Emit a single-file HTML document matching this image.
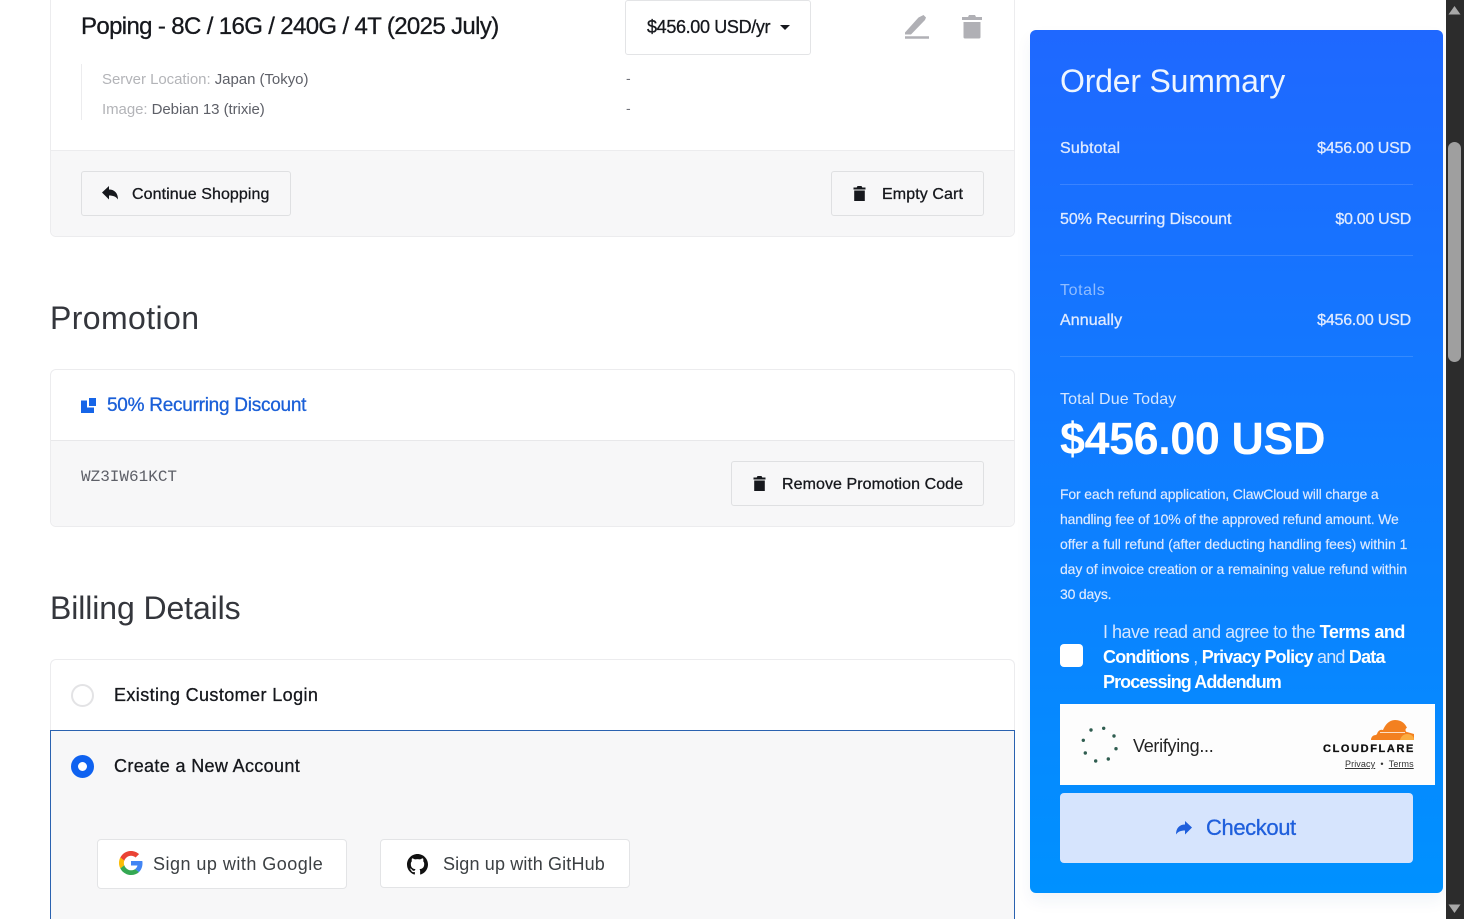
<!DOCTYPE html>
<html lang="en">
<head>
<meta charset="utf-8">
<title>Order Summary</title>
<style>
html,body{margin:0;padding:0;background:#fff;overflow:hidden}
body{width:1464px;height:919px;position:relative;font-family:"Liberation Sans",Arial,sans-serif;color:#16181d}
.a{position:absolute;box-sizing:border-box}
.t{position:absolute;white-space:nowrap;line-height:20px;height:20px}
.m{-webkit-text-stroke:.3px currentColor}
.btn{position:absolute;box-sizing:border-box;border:1px solid #e3e4e6;border-radius:3px}
.wt{color:#dfeaff}
svg{position:absolute;overflow:visible}
</style>
</head>
<body>

<!-- cart card -->
<div class="a" style="left:50px;top:-10px;width:965px;height:247px;border:1px solid #ececee;border-radius:6px;background:#fff"></div>
<div class="a" style="left:51px;top:150px;width:963px;height:86px;background:#f7f7f8;border-top:1px solid #ececee;border-radius:0 0 6px 6px"></div>
<div class="t m" style="left:81px;top:17px;font-size:24px;letter-spacing:-.64px;color:#16181d">Poping - 8C / 16G / 240G / 4T (2025 July)</div>
<div class="a" style="left:81px;top:64px;width:1px;height:56px;background:#ececee"></div>
<div class="t" style="left:102px;top:70px;font-size:15px;letter-spacing:-.04px;color:#b3b4b8">Server Location: <span style="color:#5e6068">Japan (Tokyo)</span></div>
<div class="t" style="left:102px;top:100px;font-size:15px;letter-spacing:-.06px;color:#b3b4b8">Image: <span style="color:#5e6068">Debian 13 (trixie)</span></div>
<div class="t" style="left:626px;top:68px;font-size:14px;color:#70727a">-</div>
<div class="t" style="left:626px;top:98px;font-size:14px;color:#70727a">-</div>

<div class="btn" style="left:625px;top:0;width:186px;height:55px;background:#fff"></div>
<div class="t m" style="left:647px;top:17px;font-size:18px;letter-spacing:-.35px">$456.00 USD/yr</div>
<svg style="left:780px;top:25px" width="10" height="5" viewBox="0 0 10 5"><path d="M0 0h10L5 5z" fill="#16181d"/></svg>

<!-- edit icon -->
<svg style="left:904px;top:14px" width="26" height="26" viewBox="0 0 26 26"><path d="M1 18.500 14.500 3.500 19.500 1 22 3.500 21 6 7 20.500H1z" fill="#b0b0b5"/><path d="M1 23.500h24" stroke="#b0b0b5" stroke-width="2.400"/></svg>
<!-- trash icon -->
<svg style="left:962px;top:14px" width="20" height="26" viewBox="0 0 20 26"><path d="M7 1h6l1 2h6v3H0V3h6z" fill="#b0b0b5"/><path d="M1.500 8h17v15a1.500 1.500 0 0 1-1.500 1.500H3A1.500 1.500 0 0 1 1.500 23z" fill="#b0b0b5"/></svg>

<div class="btn" style="left:81px;top:171px;width:210px;height:45px;background:#f7f7f8;border-color:#dfe0e2"></div>
<svg style="left:102px;top:186px" width="16" height="14" viewBox="0 0 16 14"><path d="M7 0v3.500C12.500 3.500 16 7 16 13.500 14 10.500 11 9.500 7 9.500V13.500L0 6.500z" fill="#16181d"/></svg>
<div class="t m" style="left:132px;top:185px;font-size:16px;letter-spacing:.08px">Continue Shopping</div>

<div class="btn" style="left:831px;top:171px;width:153px;height:45px;background:#f7f7f8;border-color:#dfe0e2"></div>
<svg style="left:853px;top:186px" width="13" height="15" viewBox="0 0 13 15"><path d="M4.500 0h4l.8 1.500h3.200v2H.500v-2h3.200z" fill="#16181d"/><path d="M1.200 4.500h10.600v10.500H1.200z" fill="#16181d"/></svg>
<div class="t m" style="left:882px;top:185px;font-size:16px;letter-spacing:.1px">Empty Cart</div>

<!-- Promotion -->
<div class="t" style="left:50px;top:303px;height:30px;line-height:30px;font-size:32px;letter-spacing:.4px;color:#34363c">Promotion</div>
<div class="a" style="left:50px;top:369px;width:965px;height:158px;border:1px solid #ececee;border-radius:6px;background:#fff"></div>
<div class="a" style="left:51px;top:440px;width:963px;height:86px;background:#f7f7f8;border-top:1px solid #e8e8ea;border-radius:0 0 6px 6px"></div>
<svg style="left:81px;top:398px" width="15" height="15" viewBox="0 0 15 15"><path d="M0 2.500h6v7h7v5.500H0z" fill="#1665e8"/><path d="M8 0h7v8H8z" fill="#1665e8"/></svg>
<div class="t m" style="left:107px;top:396px;font-size:19px;letter-spacing:-.26px;color:#1a5fd8">50% Recurring Discount</div>
<div class="t" style="left:81px;top:467px;font-family:'Liberation Mono',monospace;font-size:16px;color:#5e6068">WZ3IW61KCT</div>

<div class="btn" style="left:731px;top:461px;width:253px;height:45px;background:#f7f7f8;border-color:#dfe0e2"></div>
<svg style="left:753px;top:476px" width="13" height="15" viewBox="0 0 13 15"><path d="M4.500 0h4l.8 1.500h3.200v2H.500v-2h3.200z" fill="#16181d"/><path d="M1.200 4.500h10.600v10.500H1.200z" fill="#16181d"/></svg>
<div class="t m" style="left:782px;top:475px;font-size:16px;letter-spacing:.07px">Remove Promotion Code</div>

<!-- Billing -->
<div class="t" style="left:50px;top:593px;height:30px;line-height:30px;font-size:32px;letter-spacing:-.1px;color:#34363c">Billing Details</div>
<div class="a" style="left:50px;top:659px;width:965px;height:72px;border:1px solid #ececee;border-bottom:0;border-radius:6px 6px 0 0;background:#fff"></div>
<div class="a" style="left:71px;top:684px;width:23px;height:23px;border:2px solid #e3e3e5;border-radius:50%;background:#fff"></div>
<div class="t m" style="left:114px;top:685px;font-size:18px;letter-spacing:.4px">Existing Customer Login</div>

<div class="a" style="left:50px;top:730px;width:965px;height:200px;border:1px solid #2a62b0;background:#f7f7f8"></div>
<div class="a" style="left:71px;top:755px;width:23px;height:23px;border:7px solid #0f62f0;border-radius:50%;background:#fff"></div>
<div class="t m" style="left:114px;top:756px;font-size:18px;letter-spacing:.35px">Create a New Account</div>

<div class="btn" style="left:97px;top:839px;width:250px;height:50px;background:#fff;border-radius:4px"></div>
<svg style="left:119px;top:851px" width="24" height="24" viewBox="0 0 48 48"><path fill="#ea4335" d="M24 9.500c3.500 0 6.700 1.200 9.200 3.600l6.900-6.900C35.900 2.400 30.500 0 24 0 14.600 0 6.500 5.400 2.600 13.200l8 6.200C12.500 13.700 17.800 9.500 24 9.500z"/><path fill="#4285f4" d="M47 24.600c0-1.600-.1-3.100-.4-4.600H24v9.100h12.900c-.6 3-2.300 5.500-4.800 7.200l7.700 6c4.500-4.200 7.200-10.300 7.200-17.700z"/><path fill="#fbbc05" d="M10.500 28.700c-.5-1.500-.8-3-.8-4.700s.3-3.200.8-4.700l-8-6.200C.9 16.500 0 20.100 0 24s.9 7.500 2.600 10.800z"/><path fill="#34a853" d="M24 48c6.500 0 11.900-2.100 15.900-5.800l-7.700-6c-2.200 1.500-4.900 2.300-8.200 2.300-6.300 0-11.500-4.200-13.400-9.900l-8 6.200C6.500 42.600 14.600 48 24 48z"/></svg>
<div class="t" style="left:153px;top:854px;font-size:18px;letter-spacing:.48px;color:#3c4043">Sign up with Google</div>

<div class="btn" style="left:380px;top:839px;width:250px;height:49px;background:#fff;border-radius:4px"></div>
<svg style="left:407px;top:854px" width="21" height="21" viewBox="0 0 16 16"><path fill="#111" d="M8 0C3.580 0 0 3.580 0 8c0 3.540 2.290 6.530 5.470 7.590.4.070.55-.17.550-.38 0-.19-.01-.82-.01-1.490-2.010.37-2.530-.49-2.690-.94-.09-.23-.48-.94-.82-1.130-.28-.15-.68-.52-.01-.53.630-.01 1.080.58 1.230.82.720 1.210 1.870.87 2.330.66.070-.52.280-.87.510-1.070-1.780-.2-3.640-.89-3.640-3.950 0-.87.310-1.590.82-2.150-.08-.2-.36-1.020.08-2.120 0 0 .67-.21 2.200.82.640-.18 1.320-.27 2-.27s1.360.09 2 .27c1.530-1.040 2.200-.82 2.200-.82.440 1.100.16 1.920.08 2.120.51.560.82 1.270.82 2.150 0 3.070-1.870 3.750-3.650 3.950.290.25.540.73.540 1.480 0 1.070-.01 1.930-.01 2.200 0 .21.150.46.550.38A8.013 8.013 0 0 0 16 8c0-4.420-3.580-8-8-8z"/></svg>
<div class="t" style="left:443px;top:854px;font-size:18px;letter-spacing:.15px;color:#3c4043">Sign up with GitHub</div>

<!-- Order summary -->
<div class="a" style="left:1030px;top:30px;width:413px;height:863px;border-radius:6px;background:linear-gradient(180deg,#1f68ff 0%,#0091ff 100%);box-shadow:0 8px 16px rgba(0,60,140,.06)"></div>
<div class="t" style="left:1060px;top:64px;height:34px;line-height:34px;font-size:32px;letter-spacing:-.2px;color:#eef5ff">Order Summary</div>

<div class="t m wt" style="left:1060px;top:139px;font-size:16px;letter-spacing:.2px">Subtotal</div>
<div class="t m wt" style="right:53px;top:139px;font-size:16px;letter-spacing:-.2px">$456.00 USD</div>
<div class="a" style="left:1060px;top:184px;width:353px;height:1px;background:rgba(255,255,255,.14)"></div>
<div class="t m wt" style="left:1060px;top:210px;font-size:16px;letter-spacing:-.05px">50% Recurring Discount</div>
<div class="t m wt" style="right:53px;top:210px;font-size:16px;letter-spacing:-.3px">$0.00 USD</div>
<div class="a" style="left:1060px;top:255px;width:353px;height:1px;background:rgba(255,255,255,.14)"></div>
<div class="t" style="left:1060px;top:281px;font-size:16px;letter-spacing:.6px;color:#8fbcff">Totals</div>
<div class="t m wt" style="left:1060px;top:311px;font-size:16px;letter-spacing:.1px">Annually</div>
<div class="t m wt" style="right:53px;top:311px;font-size:16px;letter-spacing:-.2px">$456.00 USD</div>
<div class="a" style="left:1060px;top:356px;width:353px;height:1px;background:rgba(255,255,255,.14)"></div>

<div class="t" style="left:1060px;top:390px;font-size:16px;letter-spacing:.13px;color:#d5e6ff">Total Due Today</div>
<div class="t" style="left:1060px;top:416px;height:46px;line-height:46px;font-size:45px;font-weight:700;letter-spacing:-.47px;color:#fff">$456.00 USD</div>

<div class="t m" style="left:1060px;top:484px;font-size:14px;letter-spacing:-.16px;color:#dfeaff;-webkit-text-stroke-width:.15px">For each refund application, ClawCloud will charge a</div>
<div class="t m" style="left:1060px;top:509px;font-size:14px;letter-spacing:-.17px;color:#dfeaff;-webkit-text-stroke-width:.15px">handling fee of 10% of the approved refund amount. We</div>
<div class="t m" style="left:1060px;top:534px;font-size:14px;letter-spacing:-.03px;color:#dfeaff;-webkit-text-stroke-width:.15px">offer a full refund (after deducting handling fees) within 1</div>
<div class="t m" style="left:1060px;top:559px;font-size:14px;letter-spacing:-.11px;color:#dfeaff;-webkit-text-stroke-width:.15px">day of invoice creation or a remaining value refund within</div>
<div class="t m" style="left:1060px;top:584px;font-size:14px;letter-spacing:-.2px;color:#dfeaff;-webkit-text-stroke-width:.15px">30 days.</div>

<div class="a" style="left:1060px;top:644px;width:23px;height:23px;border-radius:4px;background:#fff"></div>
<div class="t" style="left:1103px;top:622px;font-size:18px;letter-spacing:-.5px;color:#d5e6ff">I have read and agree to the <b style="color:#fff">Terms and</b></div>
<div class="t" style="left:1103px;top:647px;font-size:18px;letter-spacing:-.79px;color:#d5e6ff"><b style="color:#fff">Conditions</b> , <b style="color:#fff">Privacy Policy</b> and <b style="color:#fff">Data</b></div>
<div class="t" style="left:1103px;top:672px;font-size:18px;letter-spacing:-.92px;color:#fff"><b>Processing Addendum</b></div>

<!-- Turnstile -->
<div class="a" style="left:1060px;top:704px;width:375px;height:81px;background:#fdfdfd"></div>
<svg style="left:1080px;top:725px" width="40" height="40" viewBox="0 0 40 40"><g fill="#2f5d50"><circle cx="11" cy="5" r="1.700"/><circle cx="23.700" cy="3.300" r="1.700"/><circle cx="34" cy="11" r="1.700"/><circle cx="36" cy="23.700" r="1.700"/><circle cx="28.300" cy="34" r="1.700"/><circle cx="15.700" cy="36" r="1.700"/><circle cx="5.300" cy="28" r="1.700"/><circle cx="3.300" cy="15.300" r="1.700"/></g></svg>
<div class="t" style="left:1133px;top:736px;font-size:18px;letter-spacing:-.3px;color:#232323">Verifying...</div>
<svg style="left:1370px;top:720px" width="45" height="20" viewBox="0 0 45 20"><path d="M1 20c0-3 2-5 5-5l1-1c1-3 3-5 6-4 2-5 6-10 12-10s10 3 12 8c-2 0-2 4 0 4l7 2v6z" fill="#f38020"/><path d="M30 20c1-4 4-6 7-6 4 0 7 2 7 6z" fill="#fbad41"/><path d="M10 12.500h25" stroke="#fff" stroke-width=".8"/></svg>
<div class="t" style="left:1323px;top:739px;font-size:11px;font-weight:700;letter-spacing:1.62px;color:#111;-webkit-text-stroke:.3px #111">CLOUDFLARE</div>
<div class="t" style="left:1345px;top:754px;font-size:9px;letter-spacing:.1px;color:#333"><span style="text-decoration:underline">Privacy</span> &nbsp;•&nbsp; <span style="text-decoration:underline">Terms</span></div>

<!-- Checkout -->
<div class="a" style="left:1060px;top:793px;width:353px;height:70px;border-radius:4px;background:#d6e4fd"></div>
<svg style="left:1176px;top:821px" width="16" height="14" viewBox="0 0 16 14"><path d="M9 0v3.500C3.500 3.500 0 7 0 13.500 2 10.500 5 9.500 9 9.500V13.500L16 6.500z" fill="#1f5fdc"/></svg>
<div class="t m" style="left:1206px;top:818px;font-size:22px;letter-spacing:-.4px;color:#1f5fdc">Checkout</div>

<!-- Scrollbar -->
<div class="a" style="left:1446px;top:0;width:18px;height:919px;background:#2c2c2c"></div>
<div class="a" style="left:1448px;top:142px;width:13px;height:220px;border-radius:7px;background:#9f9f9f"></div>
<svg style="left:1448px;top:5px" width="13" height="10" viewBox="0 0 13 10"><path d="M6.500 1 12.500 9.500H.500z" fill="#a8a8a8"/></svg>
<svg style="left:1448px;top:904px" width="13" height="10" viewBox="0 0 13 10"><path d="M6.500 9 12.500 .500H.500z" fill="#a8a8a8"/></svg>

</body>
</html>
